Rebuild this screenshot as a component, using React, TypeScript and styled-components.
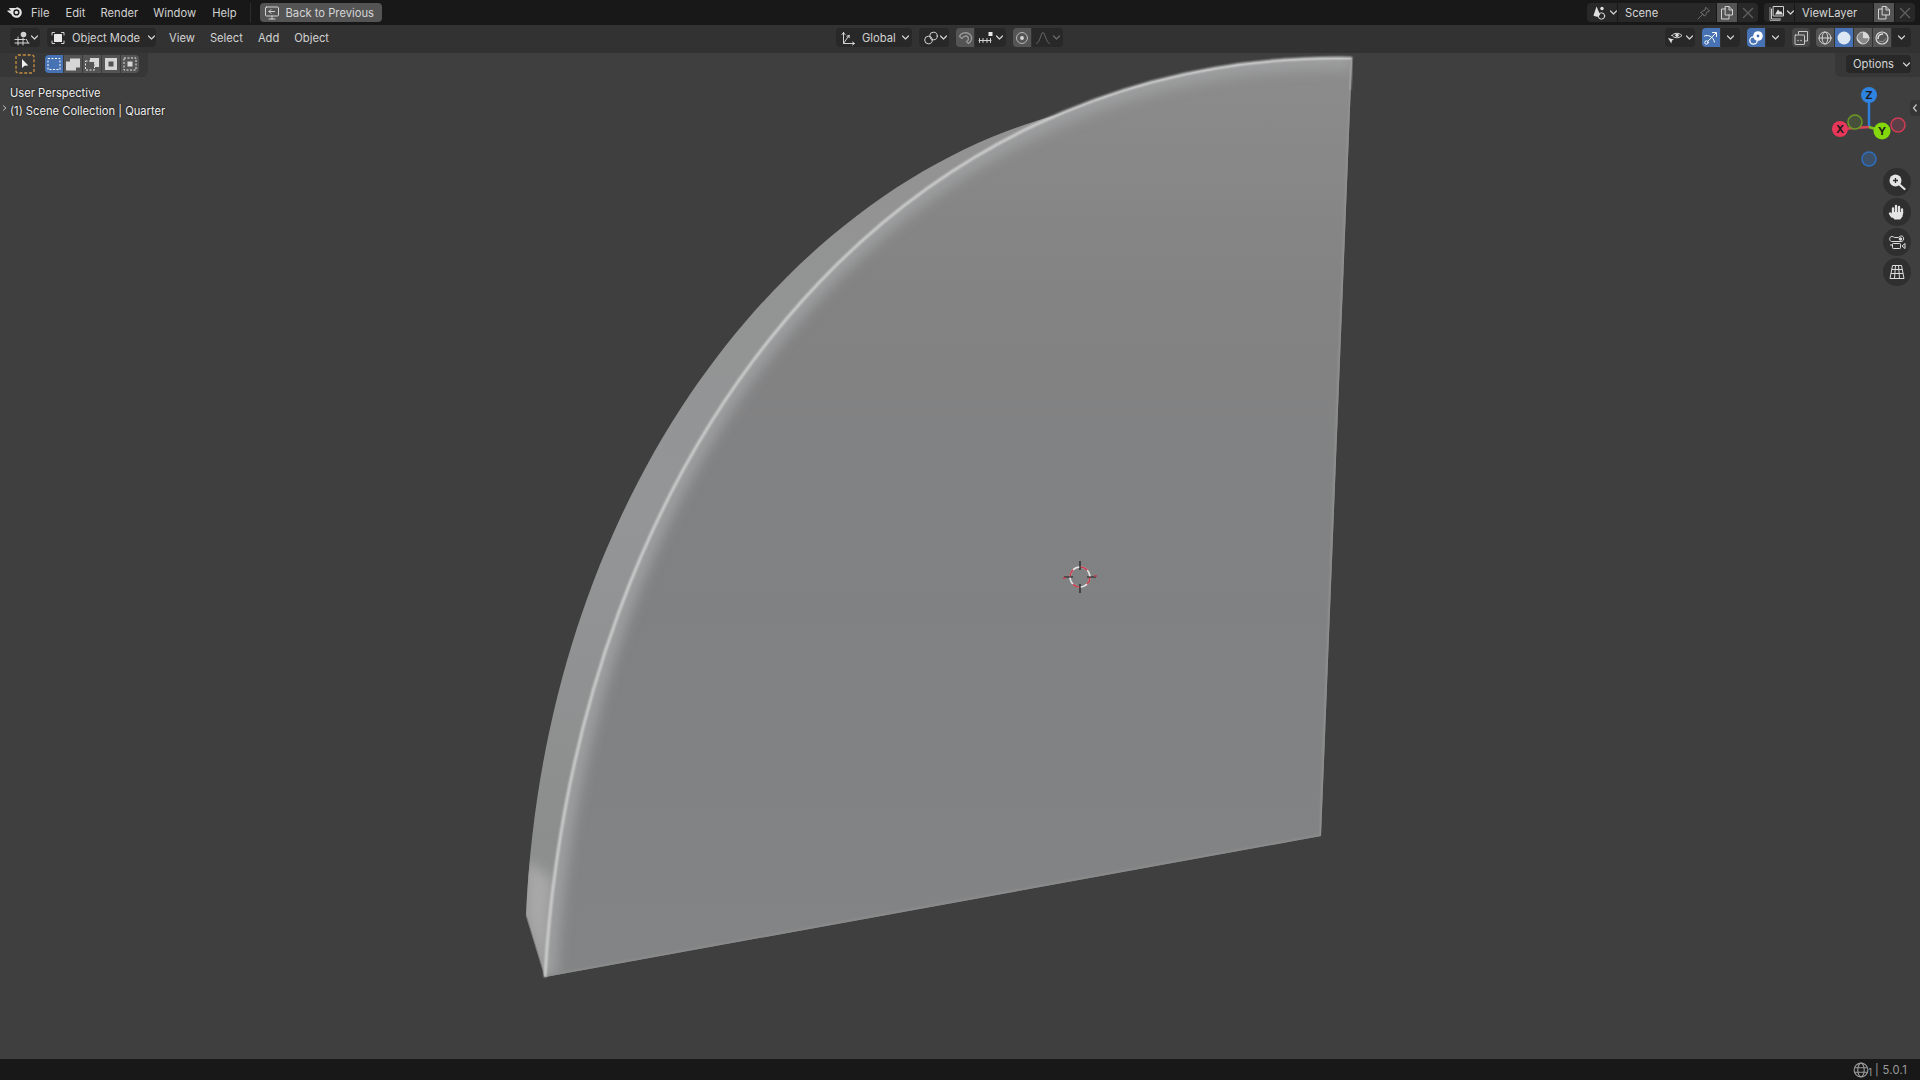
import * as React from 'react';
import styled, { createGlobalStyle } from 'styled-components';

const GlobalStyle = createGlobalStyle`
  html, body { margin: 0; padding: 0; background: #3f3f3f; }
  #root { width: 1920px; height: 1080px; overflow: hidden; }
  svg { flex: none; }
`;

const Page = styled.div`
  width: 1920px;
  height: 1080px;
  display: flex;
  flex-direction: column;
  font-family: Inter, "Liberation Sans", sans-serif;
  font-size: 11.2px;
  color: #d2d2d2;
`;

const TopBar = styled.div`
  height: 25px;
  flex: none;
  background: #181818;
  display: flex;
  align-items: center;
  padding: 0 5px 0 6px;
`;

const Logo = styled.div`
  width: 17px;
  height: 17px;
  margin-right: 8px;
  display: flex;
`;

const MenuItem = styled.span<{ $gap: number }>`
  margin-right: ${p => p.$gap}px;
  white-space: nowrap;
`;

const TopSep = styled.div`
  width: 1px;
  height: 20px;
  background: #2c2c2c;
  margin: 0 9px 0 13px;
`;

const BackButton = styled.div`
  width: 122px;
  height: 19px;
  box-sizing: border-box;
  background: #545454;
  border-radius: 4px;
  display: flex;
  align-items: center;
  gap: 6px;
  padding-left: 4px;
  color: #d6d6d6;
  white-space: nowrap;
`;

const Spring = styled.div`
  flex: 1;
`;

const Group = styled.div<{ $ml?: number }>`
  display: flex;
  align-items: center;
  height: 19px;
  margin-left: ${p => p.$ml ?? 0}px;
  border-radius: 4px;
  overflow: hidden;
`;

const Cell = styled.div<{ $w: number; $bg?: string; $pl?: number; $gap?: number }>`
  width: ${p => p.$w}px;
  height: 100%;
  flex: none;
  box-sizing: border-box;
  background: ${p => p.$bg ?? '#282828'};
  display: flex;
  align-items: center;
  justify-content: ${p => (p.$pl !== undefined ? 'flex-start' : 'center')};
  padding-left: ${p => p.$pl ?? 0}px;
  gap: ${p => p.$gap ?? 3}px;
  margin-right: 1px;
  white-space: nowrap;
  &:last-child { margin-right: 0; }
`;

const Field = styled(Cell)`
  justify-content: space-between;
  padding-right: 4px;
  color: #d6d6d6;
`;

const HeaderRow = styled.div`
  height: 28px;
  flex: none;
  box-sizing: border-box;
  background: #323232;
  display: flex;
  align-items: center;
  padding: 3px 9px 6px 10px;
`;

const LeftSection = styled.div`
  display: flex;
  align-items: center;
  flex: none;
  width: 826px;
`;

const HeaderMenu = styled.span<{ $ml: number }>`
  margin-left: ${p => p.$ml}px;
  display: inline-flex;
`;

const Center = styled.div`
  display: flex;
  align-items: center;
  flex: none;
`;

const RightSection = styled.div`
  display: flex;
  align-items: center;
  flex: 1;
  justify-content: flex-end;
`;

const Viewport = styled.div`
  flex: 1;
  background: #3f3f3f;
  position: relative;
  overflow: hidden;
`;

const Scene3D = styled.svg`
  position: absolute;
  left: 0;
  top: 0;
`;

const ToolRow = styled.div`
  position: relative;
  height: 24px;
  display: flex;
  justify-content: space-between;
`;

const ToolLeft = styled.div`
  width: 148px;
  height: 24px;
  box-sizing: border-box;
  background: #373737;
  border-bottom-right-radius: 6px;
  display: flex;
  align-items: flex-start;
  padding: 2px 0 0 15px;
`;

const ToolRight = styled.div`
  width: 85px;
  height: 24px;
  box-sizing: border-box;
  background: #373737;
  border-bottom-left-radius: 6px;
  display: flex;
  align-items: flex-start;
  justify-content: flex-end;
  padding: 2px 9px 0 0;
`;

const OptionsButton = styled.div`
  width: 65px;
  height: 18px;
  box-sizing: border-box;
  background: #282828;
  border-radius: 4px;
  display: flex;
  align-items: center;
  padding-left: 7px;
  gap: 8px;
  color: #d6d6d6;
`;

const ToolIcon = styled.div`
  width: 20px;
  height: 20px;
  margin: -1px 10px 0 0;
`;

const SelectModes = styled.div`
  display: flex;
  height: 18px;
  border-radius: 4px;
  overflow: hidden;
  gap: 1px;
  background: #3a3a3a;
`;

const ModeButton = styled.div<{ $on?: boolean }>`
  width: 18px;
  height: 18px;
  background: ${p => (p.$on ? '#4772b3' : '#545454')};
  display: flex;
  align-items: center;
  justify-content: center;
`;

const TextOverlay = styled.div`
  position: absolute;
  left: 10px;
  top: 31px;
  line-height: 18px;
  color: #efefef;
  text-shadow: 0 0 2px #000;
`;

const RegionTab = styled.div`
  position: absolute;
  left: 0;
  top: 47px;
  width: 8px;
  height: 15px;
  display: flex;
  align-items: center;
`;

const SidebarTab = styled.div`
  position: absolute;
  right: 0;
  top: 47px;
  width: 10px;
  height: 16px;
  background: #363636;
  border-radius: 3px 0 0 3px;
  display: flex;
  align-items: center;
  justify-content: center;
`;

const NavButtons = styled.div`
  position: absolute;
  left: 1883px;
  top: 115px;
  display: flex;
  flex-direction: column;
  gap: 2px;
`;

const NavButton = styled.div`
  width: 28px;
  height: 28px;
  border-radius: 50%;
  background: #2f2f2f;
  display: flex;
  align-items: center;
  justify-content: center;
`;

const GizmoWrap = styled.div`
  position: absolute;
  left: 1825px;
  top: 27px;
`;

const StatusBar = styled.div`
  height: 21px;
  flex: none;
  background: #181818;
  display: flex;
  align-items: center;
  justify-content: flex-end;
  padding-right: 13px;
  color: #9a9a9a;
  gap: 3px;
`;

const Version = styled.span`
  letter-spacing: 0.3px;
`;

const G = '#d2d2d2';

const Svg = ({ s = 16, children }: { s?: number; children: React.ReactNode }) => (
  <svg width={s} height={s} viewBox="0 0 16 16" fill="none" stroke={G} strokeWidth="1" strokeLinecap="round" strokeLinejoin="round">
    {children}
  </svg>
);

const Chevron = ({ c = G }: { c?: string }) => (
  <svg width="9" height="9" viewBox="0 0 9 9" fill="none" stroke={c} strokeWidth="1.2" strokeLinecap="round" strokeLinejoin="round">
    <path d="M1.5 3 4.5 6 7.5 3" />
  </svg>
);

const BlenderLogo = () => (
  <svg width="17" height="17" viewBox="0 0 17 17">
    <path fill="#e6e6e6" d="M10.4 3.2c3 0 5.4 2.3 5.4 5.2s-2.400 5.300-5.400 5.300c-2.300 0-4.300-1.400-5-3.400L1.600 7.400c-.5-.4-.2-1 .4-1h3.200L3.400 5c-.5-.4-.2-1 .4-1h6.600z" />
    <circle cx="10.400" cy="8.400" r="3.100" fill="#181818" />
    <circle cx="10.400" cy="8.400" r="1.700" fill="#e6e6e6" />
  </svg>
);

const BackIcon = () => (
  <Svg>
    <rect x="1.5" y="2" width="13" height="9" rx="1" />
    <path d="M5 14h6M8 11v3M10.500 6.500H5M7 4.500 5 6.500l2 2" />
  </Svg>
);

const ViewportIcon = () => (
  <Svg>
    <circle cx="9.500" cy="4.500" r="2.800" fill={G} stroke="none" />
    <path d="M1 9.500h10M1 13h14M4 7v8M9 8v7M12.500 9.500l1.500 3.500" />
  </Svg>
);

const ModeIcon = () => (
  <Svg>
    <path d="M2 5V2.500h2.500M11.500 2.500H14V5M14 11v2.500h-2.500M4.500 13.500H2V11" />
    <rect x="4" y="4" width="8" height="8" rx=".5" fill="#e8e8e8" stroke="none" />
  </Svg>
);

const GlobalIcon = () => (
  <Svg>
    <path d="M3.500 2.500v11h11M3.500 13.500 9 5.500M3.500 2.500 2 4.500M3.500 2.500 5 4.500M14.500 13.500l-2-1.500M14.500 13.500l-2 1.500M9 5.500l-2.200.6M9 5.500l.2 2.200" />
  </Svg>
);

const LinkIcon = () => (
  <Svg>
    <circle cx="5.500" cy="10" r="3.800" />
    <circle cx="10.500" cy="6" r="3.800" />
  </Svg>
);

const MagnetIcon = () => (
  <Svg>
    <path stroke="#9a9a9a" strokeWidth="1.300" d="M2.500 6.500C4 2.500 10 1.500 13 4.500s1.500 7-1.500 9L9.500 11.500c2-1 2.500-3 1.300-4.500S6.500 5.500 5 8.500z" />
  </Svg>
);

const SnapIcon = () => (
  <Svg>
    <path d="M1 10.500h12M1.500 8.500v4M5 8.500v4M9 8.500v4M12.500 8.500v4" />
    <rect x="10.500" y="2" width="4" height="4" fill="#e8e8e8" stroke="none" />
  </Svg>
);

const PropIcon = () => (
  <Svg>
    <circle cx="8" cy="8" r="5.500" stroke="#b5b5b5" />
    <circle cx="8" cy="8" r="1.900" fill="#d8d8d8" stroke="none" />
  </Svg>
);

const FalloffIcon = () => (
  <Svg>
    <path stroke="#6a6a6a" d="M1.500 13.500C5 13 6 2.500 8 2.500s3 10.500 6.500 11" />
  </Svg>
);

const SceneIcon = () => (
  <Svg>
    <path fill="#dedede" stroke="none" d="M4.500 1.500 8 9.500c-.5 1-1 1.500-1.500 2-1.500.5-4 0-5-1z" />
    <circle cx="10" cy="3.500" r="1.700" fill="#dedede" stroke="none" />
    <circle cx="9.500" cy="11" r="3.200" stroke="#dedede" />
  </Svg>
);

const PinIcon = () => (
  <Svg>
    <path stroke="#6f6f6f" d="M2 14l4-4M5 7.500 8.500 11M10 2.500l3.500 3.500-3 1.500-.5 2-1.500 1.500L5 7.500 6.500 6l2-.5z" />
  </Svg>
);

const CopyIcon = () => (
  <Svg>
    <path d="M6.500 4H2.500v10H10v-4M6.500 1.500H10l3.500 3.500v5h-7zM10 1.500V5h3.500" />
  </Svg>
);

const CloseIcon = () => (
  <Svg>
    <path stroke="#5f5f5f" strokeWidth="1.400" d="M3.500 3.500l9 9M12.500 3.500l-9 9" />
  </Svg>
);

const LayerIcon = () => (
  <Svg>
    <rect x="4.500" y="1.500" width="10" height="9.500" fill="#282828" />
    <path d="M2.500 4v10h9" />
    <path d="M1 2.500v13h10" stroke="#9a9a9a" />
    <path fill="#e0e0e0" stroke="none" d="M6 9.500 9 4.500l2 2.500 1-1 2 3.500z" />
  </Svg>
);

const EyeIcon = () => (
  <Svg>
    <path d="M5 5.500C6.500 3 11.500 2.200 15 5.500 11.500 9 6.500 8 5 5.500z" stroke="#e0e0e0" />
    <circle cx="10" cy="5.300" r="1.700" fill="#e0e0e0" stroke="none" />
    <path fill="#e0e0e0" stroke="none" d="M1 8l6 1.500-2 1-.7 3z" />
  </Svg>
);

const GizmoIcon = () => (
  <Svg>
    <circle cx="3.500" cy="12.500" r="1.700" stroke="#fff" />
    <path stroke="#fff" d="M4.800 11.300 13 3M9.500 2.500H13.500V6.500M1.500 6C5 4.500 10 6 11.500 12" />
  </Svg>
);

const OverlayIcon = () => (
  <Svg>
    <circle cx="5.500" cy="10.500" r="3.700" stroke="#fff" strokeWidth="1.300" />
    <circle cx="10" cy="6" r="4.800" fill="#fff" stroke="none" />
    <circle cx="10" cy="6" r="1.400" fill="#4772b3" stroke="none" />
  </Svg>
);

const XrayIcon = () => (
  <Svg>
    <path d="M5.500 4V1.500h9V11H12" stroke="#c8c8c8" />
    <rect x="2" y="5" width="9.500" height="9.500" rx=".5" stroke="#c8c8c8" />
    <path d="M5 10.500h.1M8 10.500h.1" strokeWidth="1.300" />
  </Svg>
);

const WireIcon = () => (
  <Svg>
    <circle cx="8" cy="8" r="6" />
    <ellipse cx="8" cy="8" rx="2.800" ry="6" />
    <path d="M2 8h12" />
  </Svg>
);

const SolidIcon = () => (
  <Svg>
    <circle cx="8" cy="8" r="6.500" fill="#dde6f3" stroke="none" />
  </Svg>
);

const MaterialIcon = () => (
  <Svg>
    <circle cx="8" cy="8" r="6" fill="#888" stroke="#cfcfcf" />
    <path fill="#d8d8d8" stroke="none" d="M8 2a6 6 0 0 1 6 6c-1 .3-3 .2-6 0z" />
    <path fill="#d8d8d8" stroke="none" d="M2 8a6 6 0 0 0 6 6c-2-1.500-4-3.500-6-6z" />
  </Svg>
);

const RenderedIcon = () => (
  <Svg>
    <circle cx="8" cy="8" r="6" stroke="#d8d8d8" strokeWidth="1.200" />
    <path stroke="#e8e8e8" strokeWidth="1.500" d="M4 8.500C4 6 6 4 8.500 4" />
    <path stroke="#9a9a9a" d="M5.500 11c2 1.500 5 .5 6-2" />
  </Svg>
);

const modeIcon = (d: React.ReactNode) => (
  <svg width="16" height="16" viewBox="0 0 16 16">{d}</svg>
);

const dash = { fill: 'none', stroke: '#e6e6e6', strokeWidth: 1, strokeDasharray: '2 1.500' };

const SELECT_MODES = [
  <rect key="a" x="2" y="2.500" width="12" height="11" {...dash} stroke="#fff" />,
  <path key="b" fill="#d6d6d6" d="M5 2.500h10v9h-4v3H1v-9h4z" />,
  <g key="c"><rect x="1.500" y="5" width="9" height="9" {...dash} /><path fill="#d6d6d6" d="M6 2h9v9h-4.500V6H6z" /></g>,
  <g key="d"><path fill="#d6d6d6" fillRule="evenodd" d="M2 2h12v12H2zM5.500 5.500v5h5v-5z" /></g>,
  <g key="e"><rect x="2" y="2" width="12" height="12" {...dash} /><rect x="5.500" y="5.500" width="5" height="5" fill="#d6d6d6" /></g>,
];

const ToolGlyph = () => (
  <svg width="20" height="20" viewBox="0 0 20 20">
    <rect x="1" y="1" width="18" height="18" rx="2" fill="none" stroke="#c8913f" strokeWidth="1.300" strokeDasharray="3 1.800" />
    <path d="M7 5.500v9l2.500-2.300 3.800-.2z" transform="translate(0 -.5)" fill="#f0f0f0" />
  </svg>
);

// curves fitted by eye to the traced edge of the model
const EDGE = 'M545 977C575 455 890 50 1352 58';
const OUTER = 'M526 915C545 490 790 185 1060 114';
const FACE = `${EDGE}L1321 836L545 977Z`;
const BODY = `${OUTER}L1352 58L545 977Z`;

const Mesh = () => (
  <Scene3D width="1920" height="1006" viewBox="0 53 1920 1006">
    <defs>
      <linearGradient id="faceFill" x1="0" y1="58" x2="0" y2="977" gradientUnits="userSpaceOnUse">
        <stop offset="0" stopColor="#8c8c8c" />
        <stop offset="0.25" stopColor="#838384" />
        <stop offset="0.6" stopColor="#808182" />
        <stop offset="1" stopColor="#838485" />
      </linearGradient>
      <linearGradient id="stripFill" x1="0" y1="58" x2="0" y2="977" gradientUnits="userSpaceOnUse">
        <stop offset="0" stopColor="#929292" />
        <stop offset="0.5" stopColor="#949596" />
        <stop offset="0.85" stopColor="#8c8d8d" />
        <stop offset="1" stopColor="#959595" />
      </linearGradient>
      <clipPath id="faceClip"><path d={FACE} /></clipPath>
      <clipPath id="bodyClip"><path d={BODY} /></clipPath>
      <filter id="blurXs" x="-5%" y="-5%" width="110%" height="110%"><feGaussianBlur stdDeviation="0.4" /></filter>
      <filter id="blurS" x="-5%" y="-5%" width="110%" height="110%"><feGaussianBlur stdDeviation="0.8" /></filter>
      <filter id="blurM" x="-5%" y="-5%" width="110%" height="110%"><feGaussianBlur stdDeviation="6" /></filter>
    </defs>
    <g filter="url(#blurXs)">
      <path d={BODY} fill="url(#stripFill)" />
      <path d="M526 915L545 977L552 880L527 860Z" fill="#a8a8a8" filter="url(#blurM)" clipPath="url(#bodyClip)" />
      <path d="M526 915L545 977" stroke="#7a7a7a" strokeWidth="1" />
      <path d={FACE} fill="url(#faceFill)" />
      <g clipPath="url(#faceClip)">
        <path d={EDGE} fill="none" stroke="#9c9d9e" strokeWidth="24" filter="url(#blurM)" />
        <path d="M1352 58L1321 836" fill="none" stroke="#929292" strokeWidth="3" filter="url(#blurS)" />
        <path d="M1321 836L545 977" fill="none" stroke="#8d8d8d" strokeWidth="3" filter="url(#blurS)" />
      </g>
      <path d={EDGE} fill="none" stroke="#dedede" strokeWidth="2.200" filter="url(#blurS)" />
      <path d="M1352 58L1350 90" fill="none" stroke="#aaa" strokeWidth="1.500" filter="url(#blurS)" />
    </g>
    <g fill="none" strokeWidth="1.500">
      <circle cx="1080" cy="577" r="10" stroke="#e8e8e8" />
      <circle cx="1080" cy="577" r="10" stroke="#c43c4c" strokeDasharray="7.850 7.850" />
      <path d="M1080 561v9M1080 584v9M1064 577h9M1087 577h9" stroke="#1a1a1a" strokeWidth="1.200" />
      <path d="M1066 578h-3M1094 576h3" stroke="#c43c4c" />
    </g>
  </Scene3D>
);

const GizmoLabel = styled.text`
  font-family: Inter, "Liberation Sans", sans-serif;
  font-size: 11px;
  font-weight: 700;
  fill: #1b1b1b;
  text-anchor: middle;
`;

const AxisGizmo = () => (
  <svg width="90" height="100" viewBox="1825 80 90 100">
    <g fill="none" strokeWidth="2.500">
      <path d="M1869 127V95" stroke="#2f7fdc" />
      <path d="M1869 127 1840 129" stroke="#d94358" />
      <path d="M1869 127 1882 131" stroke="#7fbf1f" />
    </g>
    <circle cx="1898" cy="125" r="7" fill="#5c3f46" stroke="#d23a56" strokeWidth="1.500" />
    <circle cx="1855" cy="122" r="7" fill="#46503a" stroke="#6c9a22" strokeWidth="1.500" />
    <circle cx="1869" cy="159" r="7" fill="#3c5068" stroke="#2f6fbf" strokeWidth="1.500" />
    <circle cx="1869" cy="95" r="8" fill="#2f83e0" />
    <circle cx="1840" cy="129" r="8" fill="#e8375a" />
    <circle cx="1882" cy="131" r="8.500" fill="#84d80c" />
    <GizmoLabel x={1869} y={99}>Z</GizmoLabel>
    <GizmoLabel x={1840} y={133}>X</GizmoLabel>
    <GizmoLabel x={1882} y={135}>Y</GizmoLabel>
  </svg>
);

const ZoomIcon = () => (
  <svg width="18" height="18" viewBox="0 0 18 18">
    <circle cx="7.500" cy="7.500" r="6" fill="#e4e4e4" />
    <path d="M5 7.500h5M7.500 5v5" stroke="#2f2f2f" strokeWidth="1.300" />
    <path d="M12 12l4.500 4" stroke="#e4e4e4" strokeWidth="2.200" strokeLinecap="round" />
  </svg>
);

const HandIcon = () => (
  <svg width="18" height="18" viewBox="0 0 18 18" fill="none" stroke="#e4e4e4" strokeLinecap="round">
    <path strokeWidth="2.300" d="M5 10V5.500M8 9V3M11 9V4M14 10.500V6.500M4 13.500 2 10.500" />
    <path fill="#e4e4e4" stroke="none" d="M3.800 9h11.400l-.7 4.500-2.300 3H6.500L3 12.500z" />
  </svg>
);

const CameraIcon = () => (
  <svg width="18" height="18" viewBox="0 0 18 18" fill="none" stroke="#dcdcdc" strokeWidth="1">
    <path d="M3.500 8.500C1 8 1 3.500 4 3.500c1.500 0 2 1 3 1h3c1 0 1.500-1.500 3.500-1.500 3 0 3 5.500-.5 5.500z" />
    <circle cx="12.500" cy="6" r="1.300" fill="#dcdcdc" />
    <rect x="4.500" y="10.500" width="8" height="5" rx=".8" />
    <path d="M2 12h2.500M17 10.500v5l-3-2.500z" />
  </svg>
);

const GridIcon = () => (
  <svg width="18" height="18" viewBox="0 0 18 18" fill="none" stroke="#dcdcdc" strokeWidth="1">
    <path d="M4.500 2.500h9L16 15.500H2zM7.500 2.500 6.500 15.500M10.500 2.500l1 13M3.700 6.500h10.600M3 10.500h12" />
  </svg>
);

const GlobeIcon = () => (
  <svg width="16" height="16" viewBox="0 0 14 14" fill="none" stroke="#9a9a9a" strokeWidth="1">
    <circle cx="7" cy="7" r="6" />
    <ellipse cx="7" cy="7" rx="2.800" ry="6" />
    <path d="M1.500 5h11M1.500 9h11" />
  </svg>
);

const StatusOne = styled.span`
  font-size: 10px;
  margin: 5px 0 0 -4px;
`;

const ACTIVE = '#545454';
const BLUE = '#4772b3';

export default function App() {
  return (
    <Page>
      <GlobalStyle />
      <TopBar>
        <Logo><BlenderLogo /></Logo>
        <MenuItem $gap={16}>File</MenuItem>
        <MenuItem $gap={15}>Edit</MenuItem>
        <MenuItem $gap={15}>Render</MenuItem>
        <MenuItem $gap={16}>Window</MenuItem>
        <MenuItem $gap={0}>Help</MenuItem>
        <TopSep />
        <BackButton><BackIcon />Back to Previous</BackButton>
        <Spring />
        <Group>
          <Cell $w={30} $pl={5} $gap={1}><SceneIcon /><Chevron /></Cell>
          <Field $w={98} $pl={7}>Scene<PinIcon /></Field>
          <Cell $w={20} $bg={ACTIVE}><CopyIcon /></Cell>
          <Cell $w={20}><CloseIcon /></Cell>
        </Group>
        <Group $ml={6}>
          <Cell $w={30} $pl={5} $gap={1}><LayerIcon /><Chevron /></Cell>
          <Field $w={78} $pl={7}>ViewLayer</Field>
          <Cell $w={20} $bg={ACTIVE}><CopyIcon /></Cell>
          <Cell $w={20}><CloseIcon /></Cell>
        </Group>
      </TopBar>
      <HeaderRow>
        <LeftSection>
          <Group><Cell $w={30} $pl={4} $gap={0}><ViewportIcon /><Chevron /></Cell></Group>
          <Group $ml={7}><Cell $w={109} $pl={3}><ModeIcon /><HeaderMenu $ml={3}>Object Mode</HeaderMenu><HeaderMenu $ml={4}><Chevron /></HeaderMenu></Cell></Group>
          <HeaderMenu $ml={13}>View</HeaderMenu>
          <HeaderMenu $ml={15}>Select</HeaderMenu>
          <HeaderMenu $ml={15}>Add</HeaderMenu>
          <HeaderMenu $ml={15}>Object</HeaderMenu>
        </LeftSection>
        <Center>
          <Group><Cell $w={76} $pl={4}><GlobalIcon /><HeaderMenu $ml={3}>Global</HeaderMenu><HeaderMenu $ml={2}><Chevron /></HeaderMenu></Cell></Group>
          <Group $ml={7}><Cell $w={30} $pl={4} $gap={0}><LinkIcon /><Chevron /></Cell></Group>
          <Group $ml={7}>
            <Cell $w={18} $bg={ACTIVE}><MagnetIcon /></Cell>
            <Cell $w={31} $pl={3} $gap={1}><SnapIcon /><Chevron /></Cell>
          </Group>
          <Group $ml={7}>
            <Cell $w={18} $bg={ACTIVE}><PropIcon /></Cell>
            <Cell $w={31} $pl={3} $gap={1}><FalloffIcon /><Chevron c="#6a6a6a" /></Cell>
          </Group>
        </Center>
        <RightSection>
          <Group><Cell $w={30} $pl={2} $gap={2}><EyeIcon /><Chevron /></Cell></Group>
          <Group $ml={7}>
            <Cell $w={18} $bg={BLUE}><GizmoIcon /></Cell>
            <Cell $w={19}><Chevron /></Cell>
          </Group>
          <Group $ml={7}>
            <Cell $w={18} $bg={BLUE}><OverlayIcon /></Cell>
            <Cell $w={19}><Chevron /></Cell>
          </Group>
          <Group $ml={7}><Cell $w={18} $bg="#464646"><XrayIcon /></Cell></Group>
          <Group $ml={6}>
            <Cell $w={18} $bg={ACTIVE}><WireIcon /></Cell>
            <Cell $w={18} $bg={BLUE}><SolidIcon /></Cell>
            <Cell $w={18} $bg={ACTIVE}><MaterialIcon /></Cell>
            <Cell $w={18} $bg={ACTIVE}><RenderedIcon /></Cell>
            <Cell $w={19}><Chevron /></Cell>
          </Group>
        </RightSection>
      </HeaderRow>
      <Viewport>
        <Mesh />
        <ToolRow>
          <ToolLeft>
            <ToolIcon><ToolGlyph /></ToolIcon>
            <SelectModes>
              {SELECT_MODES.map((m, i) => (
                <ModeButton key={i} $on={i === 0}>{modeIcon(m)}</ModeButton>
              ))}
            </SelectModes>
          </ToolLeft>
          <ToolRight>
            <OptionsButton>Options<Chevron /></OptionsButton>
          </ToolRight>
        </ToolRow>
        <TextOverlay>
          <div>User Perspective</div>
          <div>(1) Scene Collection | Quarter</div>
        </TextOverlay>
        <RegionTab>
          <svg width="8" height="10" viewBox="0 0 8 10" fill="none" stroke="#b5b5b5" strokeWidth="1"><path d="M3 2.500 6 5 3 7.500" /></svg>
        </RegionTab>
        <SidebarTab>
          <svg width="8" height="10" viewBox="0 0 8 10" fill="none" stroke="#c8c8c8" strokeWidth="1.200"><path d="M5.500 1.500 2.500 5l3 3.500" /></svg>
        </SidebarTab>
        <GizmoWrap><AxisGizmo /></GizmoWrap>
        <NavButtons>
          <NavButton><ZoomIcon /></NavButton>
          <NavButton><HandIcon /></NavButton>
          <NavButton><CameraIcon /></NavButton>
          <NavButton><GridIcon /></NavButton>
        </NavButtons>
      </Viewport>
      <StatusBar>
        <GlobeIcon />
        <StatusOne>1</StatusOne>
        <Version>| 5.0.1</Version>
      </StatusBar>
    </Page>
  );
}
